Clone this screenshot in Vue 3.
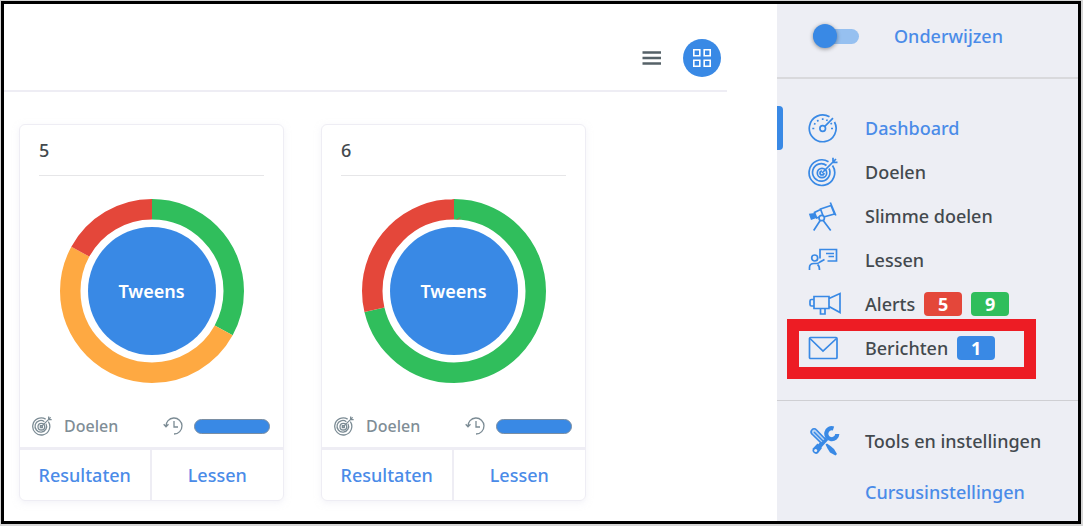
<script setup>
import { ref } from 'vue'

const teaching = ref(false)
const view = ref('grid')

const cards = [
  {
    title: '5',
    label: 'Tweens',
    segments: [
      { color: '#30be5c', start: 0, size: 33 },
      { color: '#fea942', start: 33, size: 50 },
      { color: '#e4473a', start: 83, size: 17 }
    ]
  },
  {
    title: '6',
    label: 'Tweens',
    segments: [
      { color: '#30be5c', start: 0, size: 71.3 },
      { color: '#e4473a', start: 71.3, size: 28.7 }
    ]
  }
]

const items = [
  { id: 'dashboard', label: 'Dashboard', active: true, badges: [] },
  { id: 'goals', label: 'Doelen', badges: [] },
  { id: 'smart', label: 'Slimme doelen', badges: [] },
  { id: 'lessons', label: 'Lessen', badges: [] },
  { id: 'alerts', label: 'Alerts', badges: [{ n: 5, tone: 'red' }, { n: 9, tone: 'green' }] },
  { id: 'messages', label: 'Berichten', marked: true, badges: [{ n: 1, tone: 'blue' }] }
]
</script>

<template>
  <div class="page">
    <div class="frame">
      <main class="main">
        <div class="toolbar">
          <button class="view" type="button" aria-label="Lijst" @click="view = 'list'">
            <svg width="20" height="16" viewBox="0 0 20 16" fill="none" stroke="#566268" stroke-width="2.6">
              <path d="M.5 2.500h18.500M.5 8h18.500M.5 13.500h18.500" />
            </svg>
          </button>
          <button class="view chosen" type="button" aria-label="Raster" @click="view = 'grid'">
            <svg width="20" height="20" viewBox="0 0 20 20" fill="none" stroke="#fff" stroke-width="1.6">
              <path d="M1.800 1.800h6v6h-6zM12.200 1.800h6v6h-6zM1.800 12.200h6v6h-6zM12.200 12.200h6v6h-6z" />
            </svg>
          </button>
        </div>

        <div class="cards">
          <article v-for="card in cards" :key="card.title" class="card">
            <h2>{{ card.title }}</h2>
            <div class="donut">
              <svg width="184" height="184" viewBox="0 0 184 184" aria-hidden="true">
                <g fill="none" stroke-width="20.5" transform="rotate(-90 92 92)">
                  <circle
                    v-for="s in card.segments"
                    :key="s.start"
                    cx="92"
                    cy="92"
                    r="81.75"
                    pathLength="100"
                    :stroke="s.color"
                    :stroke-dasharray="`${s.size} ${100 - s.size}`"
                    :stroke-dashoffset="-s.start"
                  />
                </g>
              </svg>
              <button type="button" class="disc">{{ card.label }}</button>
            </div>
            <div class="stats">
              <svg class="small" width="20" height="20" viewBox="0 0 30 30" fill="none" stroke="#7b8b94" stroke-width="1.900">
                <path d="M20.500 4.700A12.800 12.800 0 1 0 24.500 8.500" />
                <path d="M18.500 8.500A8.700 8.700 0 1 0 21 11.500" />
                <circle cx="14" cy="16" r="5" />
                <path d="M12.500 14.500h3v3h-3zM14 16 25 5M25 .8v4.500h4.500M25 5l3-3" />
              </svg>
              <span>Doelen</span>
              <svg class="clock" width="20" height="20" viewBox="0 0 20 20" fill="none" stroke="#7b8b94" stroke-width="1.300">
                <path d="M3 10.500A8 8 0 1 1 11 18M.7 8.300 3 10.800l2.500-2.500M11 5v6h4" />
              </svg>
              <div class="bar" role="progressbar" aria-label="Voortgang" aria-valuenow="100" aria-valuemin="0" aria-valuemax="100"></div>
            </div>
            <div class="actions">
              <a href="#">Resultaten</a>
              <a href="#">Lessen</a>
            </div>
          </article>
        </div>
      </main>

      <aside class="side">
        <label class="mode">
          <input v-model="teaching" type="checkbox" />
          <span class="track"></span>
          <span>Onderwijzen</span>
        </label>

        <nav class="nav">
          <a
            v-for="item in items"
            :key="item.id"
            href="#"
            class="item"
            :class="{ active: item.active, marked: item.marked }"
          >
            <svg class="icon" width="34" height="30" viewBox="0 0 34 30" fill="none" stroke="currentColor" stroke-width="1.700">
              <template v-if="item.id === 'dashboard'">
                <path d="M21.500 3.800A13.400 13.400 0 1 0 26.500 9" />
                <circle cx="14.700" cy="15.500" r="2.800" />
                <path d="M16.800 13.400 25 5.200" />
                <path d="M4.300 15.500h2M23 15.500h2M6 10.500l1.500.8M9.300 7l1 1.500M14.700 5.200v1.800M19.300 6.500l-.7 1.500M22.500 11l1.500-.8" />
              </template>
              <template v-else-if="item.id === 'goals'">
                <path d="M20.500 4.700A12.800 12.800 0 1 0 24.500 8.500" />
                <path d="M18.500 8.500A8.700 8.700 0 1 0 21 11.500" />
                <circle cx="14" cy="16" r="4.700" />
                <path d="M14 14a2 2 0 1 0 2 2M14 16 25 5M25 .8v4.500h4.500M25 5l3-3" />
              </template>
              <template v-else-if="item.id === 'smart'">
                <path d="M12.500 8 23 4.500 26.500 13 15.500 16zM22.300 1.500l5.500 13M12.500 8.500 6.500 11.500l2.200 5.500 4-1.500" />
                <path d="m2 13.500 1.500 4.500 4-1.500-1.300-3.500z" fill="currentColor" />
                <circle cx="13.700" cy="17" r="2.700" fill="#edeef4" />
                <path d="m12.200 19.500-6.500 10M15.200 19.500l7.500 10" />
              </template>
              <template v-else-if="item.id === 'lessons'">
                <path d="M12 13.500V4.500h16.500v11.500H19.500M18 8.500h8M20.500 11.500H26" />
                <circle cx="6.700" cy="13" r="3" />
                <path d="M1.500 25v-2.500c0-2.500 2-4 4.500-4h2.500c1.500 0 2.500-.5 3.500-1.500l4.500-2.500M9.500 19.500c1.500 1 2 2.500 2 5.500" />
              </template>
              <template v-else-if="item.id === 'alerts'">
                <path d="M6 7.500h15v12H6zM6 10.500H3.500a1.500 1.500 0 0 0-1.500 1.500v3.500A1.500 1.500 0 0 0 3.500 17H6M21 9.500l11-5v19l-11-6M12.500 20v5h4.500V20" />
              </template>
              <template v-else>
                <rect x="1.500" y="4.500" width="27.500" height="21" rx="1" />
                <path d="m2 5.500 13 12.500 13.500-12.500" />
              </template>
            </svg>
            <span>{{ item.label }}</span>
            <b v-for="b in item.badges" :key="b.n" class="badge" :class="b.tone">{{ b.n }}</b>
          </a>
        </nav>

        <div class="tools">
          <a href="#" class="item">
            <svg class="icon" width="34" height="30" viewBox="0 0 34 30">
              <path d="M25.500 2.500A5.500 5.500 0 1 0 29.300 8" fill="none" stroke="currentColor" stroke-width="4.200" />
              <path d="M18.500 12.500 9 23" stroke="currentColor" stroke-width="4.500" />
              <path d="M4.800 22.500 9.500 17.500l4.500 4.500-4 5.300a3.700 3.700 0 0 1-5.200-4.800z" fill="currentColor" />
              <path d="m17.500 18.500 1.500-1 3.500 2.500 3.500 3 3 5-1.500 1.500-5.500-3-2.500-4z" fill="currentColor" />
              <path d="M4 3.800a2.800 2.800 0 0 1 4.300 0l9 9.500-3.800 4-9.300-9a3.200 3.200 0 0 1-.2-4.500z" fill="#b9d4f4" stroke="currentColor" stroke-width="1.600" />
              <path d="m6 6 9 9" stroke="currentColor" stroke-width="1.500" />
              <circle cx="7.700" cy="24.500" r="1.500" fill="#edeef4" />
            </svg>
            <span>Tools en instellingen</span>
          </a>
          <a href="#" class="sub">Cursusinstellingen</a>
        </div>
      </aside>
    </div>
  </div>
</template>

<style>
body {
  margin: 0;
}
</style>

<style scoped>
* {
  box-sizing: border-box;
}
.page {
  min-height: 100vh;
  display: flex;
  padding: 1px 2px 2px 1px;
  background: #d6d6d6;
  font: 500 18px/24px "Noto Sans", "Open Sans", sans-serif;
  color: #43494e;
}
.frame {
  flex: 1;
  display: flex;
  border: 3px solid #000;
  background: #fff;
}
a {
  color: #4a8be8;
  text-decoration: none;
}
button {
  font: inherit;
  border: 0;
  padding: 0;
  cursor: pointer;
}
.main {
  flex: 1;
}
.toolbar {
  display: flex;
  justify-content: flex-end;
  align-items: center;
  gap: 12px;
  height: 88px;
  margin-right: 50px;
  padding: 22px 6px 0 0;
  border-bottom: 2px solid #eeedf4;
}
.view {
  display: grid;
  place-items: center;
  width: 38px;
  height: 38px;
  border-radius: 50%;
  background: none;
}
.chosen {
  background: #3989e5;
}
.cards {
  display: flex;
  flex-wrap: wrap;
  gap: 37px;
  padding: 32px 15px 20px;
}
.card {
  width: 265px;
  border: 1px solid #eeedf4;
  border-radius: 6px;
  box-shadow: 0 2px 6px #e8e8f280;
}
h2 {
  margin: 0 19px 23px;
  padding: 13px 0;
  border-bottom: 1px solid #e6e6e8;
  font: inherit;
}
.donut {
  display: grid;
  place-items: center;
}
.donut > * {
  grid-area: 1 / 1;
}
.disc {
  width: 128px;
  height: 128px;
  border-radius: 50%;
  background: #3989e5;
  color: #fff;
  font-weight: 600;
}
.stats {
  display: flex;
  align-items: center;
  height: 42px;
  margin: 22px 13px 0 12px;
  color: #7f8d96;
  font-size: 16px;
}
.small {
  margin-right: 12px;
}
.clock {
  margin: 0 11px 0 auto;
}
.bar {
  width: 76px;
  height: 15px;
  border: 1px solid #7a8ea3;
  border-radius: 8px;
  background: #3989e5;
}
.actions {
  display: grid;
  grid-template-columns: 1fr 1fr;
  border-top: 3px solid #eeedf4;
  text-align: center;
}
.actions a {
  padding: 13px 0;
}
.actions a:first-child {
  border-right: 2px solid #eeedf4;
}
.side {
  width: 301px;
  background: #edeef4;
}
.mode {
  display: flex;
  align-items: center;
  height: 73px;
  padding: 0 0 9px 36px;
  color: #4a8be8;
}
.mode input {
  position: absolute;
  opacity: 0;
}
.track {
  position: relative;
  width: 46px;
  height: 15px;
  margin-right: 35px;
  border-radius: 8px;
  background: #96c0f0;
}
.track::before {
  content: "";
  position: absolute;
  left: 0;
  top: -5px;
  width: 24px;
  height: 24px;
  border-radius: 50%;
  background: #3989e5;
  box-shadow: 0 1px 4px #0006;
}
.mode input:checked + .track::before {
  left: 22px;
}
.nav {
  padding: 27px 0 30px;
  border-top: 2px solid #d9d9dc;
  border-bottom: 1px solid #cfcfd3;
}
.item {
  position: relative;
  display: flex;
  align-items: center;
  height: 44px;
  padding-left: 31px;
  color: #43494e;
}
.icon {
  margin-right: 23px;
  color: #3989e5;
}
.active {
  color: #4a8be8;
}
.active::before {
  content: "";
  position: absolute;
  left: 0;
  top: 0;
  width: 6px;
  height: 44px;
  border-radius: 0 4px 4px 0;
  background: #3989e5;
}
.marked::after {
  content: "";
  position: absolute;
  left: 10px;
  right: 42px;
  top: -7px;
  bottom: -9px;
  border: 12px solid #ed1c24;
}
.badge {
  width: 38px;
  margin-left: 9px;
  border-radius: 4px;
  color: #fff;
  text-align: center;
}
.red {
  background: #e4473a;
}
.green {
  background: #30be5c;
}
.blue {
  background: #3989e5;
}
.tools {
  padding-top: 18px;
}
.sub {
  display: block;
  padding: 17px 0 17px 88px;
}
</style>
